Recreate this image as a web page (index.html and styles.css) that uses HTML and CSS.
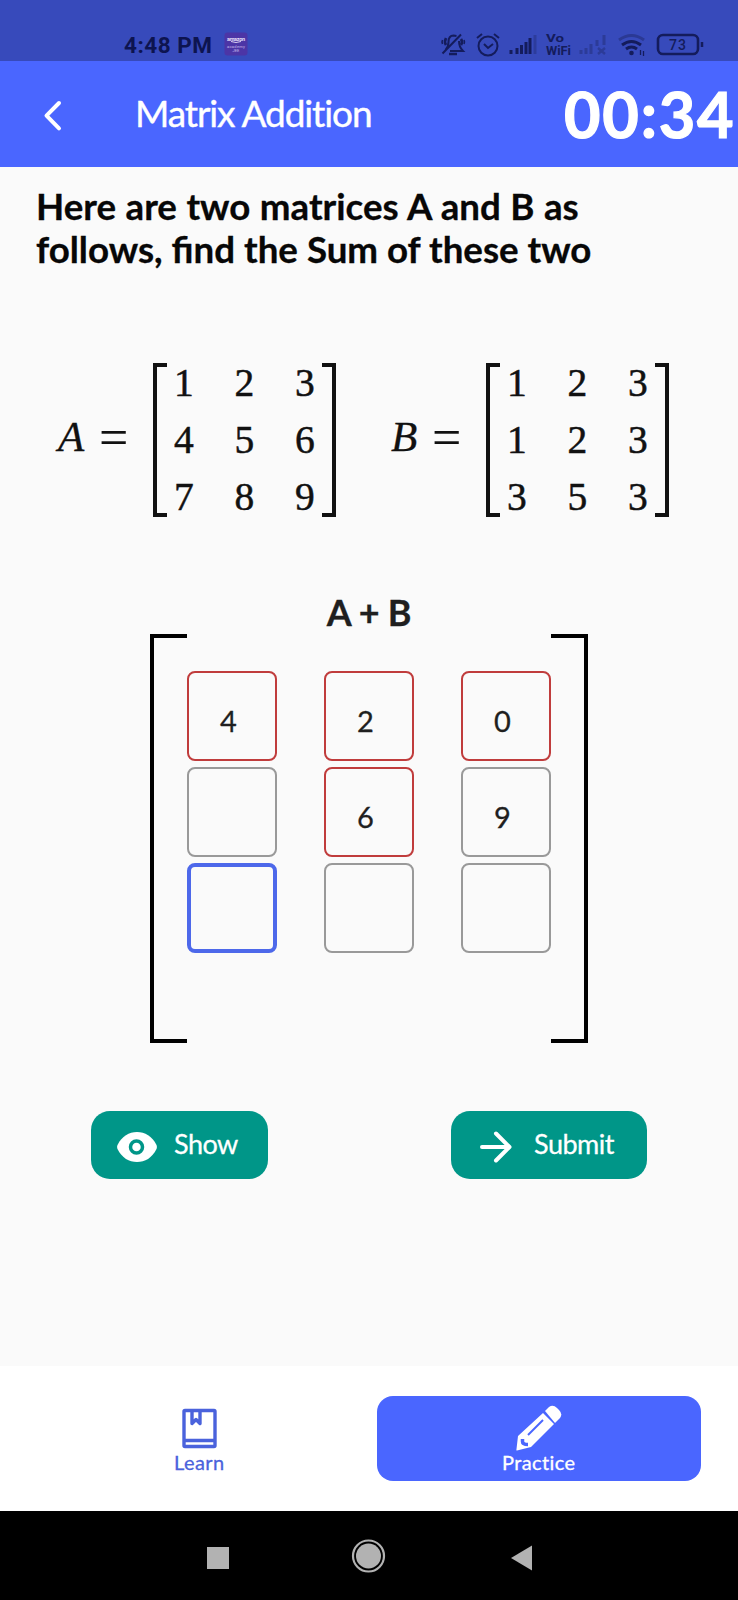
FILE: index.html
```html
<!DOCTYPE html>
<html lang="en">
<head>
<meta charset="utf-8">
<title>Matrix Addition</title>
<link rel="stylesheet" href="styles.css">
</head>
<body>
<header class="status">
  <span class="clock">4:48 PM</span>
  <svg class="badge" width="24" height="24" viewBox="0 0 24 24"><rect x=".5" y=".5" width="23" height="23" rx="3" fill="#4c35a6"/><text x="12" y="8.5" class="badge-name" textLength="18">amazon</text><path d="M7 9.500q5 2 10 0" stroke="#d8d0f0" fill="none"/><text x="12" y="15.5" class="badge-sub" textLength="18">academy</text><text x="12" y="20" class="badge-sub">JEE</text></svg>
  <svg class="status-icons" width="266" height="26" viewBox="440 32 266 26" fill="none" stroke="#141c5c" stroke-width="2">
    <path d="M442.500 53.500L461 34.500M445.500 50c2-2 3-4 3-8 0-4 2-6.500 5-6.500l3 .5M459 41c0 5 1 7 4 10h-13"/><path d="M449 54h8M446 38q-2 4 0 7M461 39q2 3 0 6" stroke-width="2.600"/><path d="M442.500 40q-1 2 0 4M464 40q1 2 0 4" stroke-width="1.600"/>
    <circle cx="488" cy="46" r="9.500"/><path d="M484 44l4 4 5-4M477 38l5-4M499 38l-5-4"/>
    <path d="M511 54v-4M517 54v-6M521.500 54v-9M526 54v-12M530 54V38" stroke-width="3"/><path d="M535 54V35" stroke="#2d3c9c" stroke-width="3"/>
    <path d="M581 54v-4M586 54v-6M591 54v-10M597 46v-6M604 45V35" stroke="#2c3b98" stroke-width="3"/><path d="M598 48l7 6M605 48l-7 6" stroke="#2c3b98" stroke-width="2.400"/>
    <path d="M619 40q12.500-9 25 0" stroke="#2b3994" stroke-width="3"/><path d="M622 45q9.500-7 19 0M626 49q5.500-4 11 0" stroke-width="3"/><circle cx="631.500" cy="53" r="2.300" fill="#141c5c" stroke="none"/><path d="M640.500 50v5M643.500 51v5" stroke-width="1.300"/>
    <rect x="658" y="35" width="40" height="19" rx="5" stroke-width="2.600"/><path d="M702 42v5" stroke-width="2.500"/>
    <g class="status-text"><text x="546" y="42" textLength="18" lengthAdjust="spacingAndGlyphs" font-size="11">Vo</text><text x="546" y="55" textLength="25" lengthAdjust="spacingAndGlyphs" font-size="12">WiFi</text><text x="669" y="50" textLength="17" class="level">73</text></g>
  </svg>
</header>
<div class="appbar">
  <svg class="back" width="20" height="32" viewBox="0 0 20 32"><path d="M17 3L4.500 15.700 17 28.400" fill="none" stroke="#fff" stroke-width="4" stroke-linecap="round" stroke-linejoin="round"/></svg>
  <h1 class="title">Matrix Addition</h1>
  <span class="timer">00:34</span>
</div>
<main class="content">
  <p class="question"><span class="q1">Here are two matrices A and B as</span><br><span class="q2">follows, find the Sum of these two</span></p>
  <section class="operands">
    <div class="operand"><span class="name">A</span><span class="eq">=</span><div class="matrix"><span>1</span><span>2</span><span>3</span><span>4</span><span>5</span><span>6</span><span>7</span><span>8</span><span>9</span></div></div>
    <div class="operand"><span class="name">B</span><span class="eq">=</span><div class="matrix"><span>1</span><span>2</span><span>3</span><span>1</span><span>2</span><span>3</span><span>3</span><span>5</span><span>3</span></div></div>
  </section>
  <h2 class="sum-title">A + B</h2>
  <section class="answer">
    <i class="bracket left"></i>
    <div class="cells">
      <div class="cell wrong">4</div><div class="cell wrong">2</div><div class="cell wrong">0</div>
      <div class="cell"></div><div class="cell wrong">6</div><div class="cell">9</div>
      <div class="cell focus"></div><div class="cell"></div><div class="cell"></div>
    </div>
    <i class="bracket right"></i>
  </section>
  <div class="actions">
    <button class="btn show"><svg width="40" height="30" viewBox="0 0 40 30"><path d="M.500 13C5 4 12 0 20 0s15 4 19.500 13q.8 2 0 4C35 26 28 30 20 30S5 26 .500 17q-.8-2 0-4z" fill="#fff"/><circle cx="19.500" cy="15" r="6" fill="#fff" stroke="#009688" stroke-width="3.500"/></svg><span>Show</span></button>
    <button class="btn submit"><svg width="32" height="32" viewBox="0 0 32 32"><path d="M2 16h27M16 2.500L29.500 16 16 29.500" fill="none" stroke="#fff" stroke-width="4" stroke-linecap="round" stroke-linejoin="round"/></svg><span>Submit</span></button>
  </div>
</main>
<nav class="tabs">
  <a class="tab learn"><svg width="46" height="46" viewBox="0 0 46 46" fill="none" stroke="#4a62dc" stroke-width="3.400" stroke-linejoin="round"><rect x="8" y="5.500" width="31" height="36" rx="1"/><path d="M8 35.500h31M16 6v12.500l4-4 4 4V6"/></svg><span>Learn</span></a>
  <a class="tab practice"><svg width="46" height="46" viewBox="0 0 46 46"><path d="M27 8L38 19 15 42 1 45.500Q0 46 .500 44L2 31z" fill="#fff"/><path d="M29 6l4-4q4-3 8 1l2 2q4 4 1 8l-5 5z" fill="#fff"/><path d="M12 30l15-15" stroke="#4a66ff" stroke-width="2"/><path d="M6.500 34v2.500q0 3 5.500 3" fill="none" stroke="#4a66ff" stroke-width="3.500"/></svg><span>Practice</span></a>
</nav>
<footer class="system">
  <svg width="738" height="89" viewBox="0 0 738 89" fill="#b2b2b2"><rect x="207" y="36" width="22" height="22"/><circle cx="368.500" cy="45" r="12.500"/><circle cx="368.500" cy="45" r="15.500" fill="none" stroke="#b2b2b2" stroke-width="2.200"/><path d="M511 47l21-12.500v25z"/></svg>
</footer>
</body>
</html>
```
FILE: styles.css
```css
* { box-sizing: border-box; }
body { margin: 0; width: 738px; height: 1600px; display: flex; flex-direction: column; background: #fafafa; font-family: Lato, "Open Sans", sans-serif; color: #1f1f1f; overflow: hidden; }

.status { height: 61px; background: #374abb; display: flex; align-items: flex-start; padding: 32px 0 0 124px; flex: none; }
.clock { font: 700 22.500px/26px Roboto, sans-serif; color: #0d1450; width: 100px; letter-spacing: .5px; white-space: nowrap; }
.badge-name { font: 700 5.500px Roboto, sans-serif; fill: #e4def8; text-anchor: middle; }
.badge-sub { font: 4px Roboto, sans-serif; fill: #c4b8ec; text-anchor: middle; }
.status-icons { margin-left: 192px; }
.status-text { fill: #141c5c; stroke: none; font-family: Roboto, sans-serif; font-weight: 700; }
.level { font-size: 14px; font-weight: 500; }

.appbar { height: 106px; flex: none; background: #4a66ff; color: #fff; display: flex; align-items: center; padding-left: 42px; }
.back { margin-top: 4px; }
.title { margin: 0 0 2px 73px; width: 429px; font-weight: 400; font-size: 37px; line-height: 44px; white-space: nowrap; letter-spacing: -1.1px; -webkit-text-stroke: .4px #fff; }
.timer { font-weight: 700; font-size: 63px; line-height: 76px; white-space: nowrap; letter-spacing: 1.8px; -webkit-text-stroke: 1.2px #fff; }

.content { height: 1199px; flex: none; }
.question { margin: 0; padding: 18px 0 0 36px; height: 196px; font-weight: 700; font-size: 36.700px; line-height: 43px; color: #070707; white-space: nowrap; -webkit-text-stroke: .3px #070707; }
.q1 { word-spacing: .6px; }

.operands { display: flex; height: 154px; padding-left: 56px; gap: 53px; font-family: "Liberation Serif", serif; color: #111; }
.operand { display: flex; align-items: center; width: 280px; }
.name { font-style: italic; font-size: 43px; width: 43px; margin-top: -7px; padding-left: 2px; -webkit-text-stroke: .3px #111; }
.eq { font-size: 52px; width: 54px; margin-top: -5px; }
.matrix { position: relative; width: 183px; height: 154px; display: grid; grid-template-columns: repeat(3, 60.500px); grid-auto-rows: 57px; font-size: 39.500px; line-height: 41px; text-align: center; border: solid #111; border-width: 0 4px; -webkit-text-stroke: .5px #111; }
.matrix span { margin-left: -7px; }
.matrix::before, .matrix::after { content: ""; position: absolute; top: 0; bottom: 0; width: 12px; border: solid #111; border-width: 4px 0; }
.matrix::before { left: -2px; }
.matrix::after { right: -2px; }

.sum-title { margin: 75px 0 0; height: 42px; font-size: 36px; line-height: 40px; text-align: center; letter-spacing: -.3px; -webkit-text-stroke: .3px #1f1f1f; }
.answer { display: flex; width: 438px; height: 409px; margin: 0 auto; }
.bracket { width: 37px; border: 4px solid #000; }
.left { border-right: 0; }
.right { border-left: 0; }
.cells { display: grid; grid-template-columns: repeat(3, 90px); grid-auto-rows: 90px; column-gap: 47px; row-gap: 6px; padding-top: 37px; width: 364px; }
.cell { border: 2px solid #999; border-radius: 8px; font-size: 29px; line-height: 96px; text-align: center; padding-right: 7px; -webkit-text-stroke: .3px #1f1f1f; }
.wrong { border-color: #c03c3c; }
.focus { border: 4px solid #4d68ea; }

.actions { display: flex; justify-content: space-between; padding: 68px 91px 0; }
.btn { display: flex; align-items: center; height: 68px; border: 0; border-radius: 19px; background: #009688; color: #fff; font: 400 27px/32px Lato, sans-serif; padding: 0 0 0 26px; letter-spacing: -.5px; -webkit-text-stroke: .3px #fff; }
.btn svg { margin-top: 4px; flex: none; }
.btn span { margin: -2px 0 0 17px; }
.show { width: 177px; }
.submit { width: 196px; padding-left: 29px; }
.submit span { margin-left: 22px; }

.tabs { height: 145px; flex: none; background: #fff; display: flex; padding: 30px 37px 0 37px; gap: 15px; }
.tab { width: 325px; height: 85px; display: flex; flex-direction: column; align-items: center; padding-top: 9px; font-size: 20px; line-height: 24px; color: #4a62dc; border-radius: 16px; letter-spacing: .4px; -webkit-text-stroke: .3px currentColor; }
.tab svg { -webkit-text-stroke: 0; }
.tab span { margin-top: -1px; }
.practice { background: #4a66ff; color: #fff; }

.system { height: 89px; flex: none; background: #000; }
.system svg { display: block; }
```
